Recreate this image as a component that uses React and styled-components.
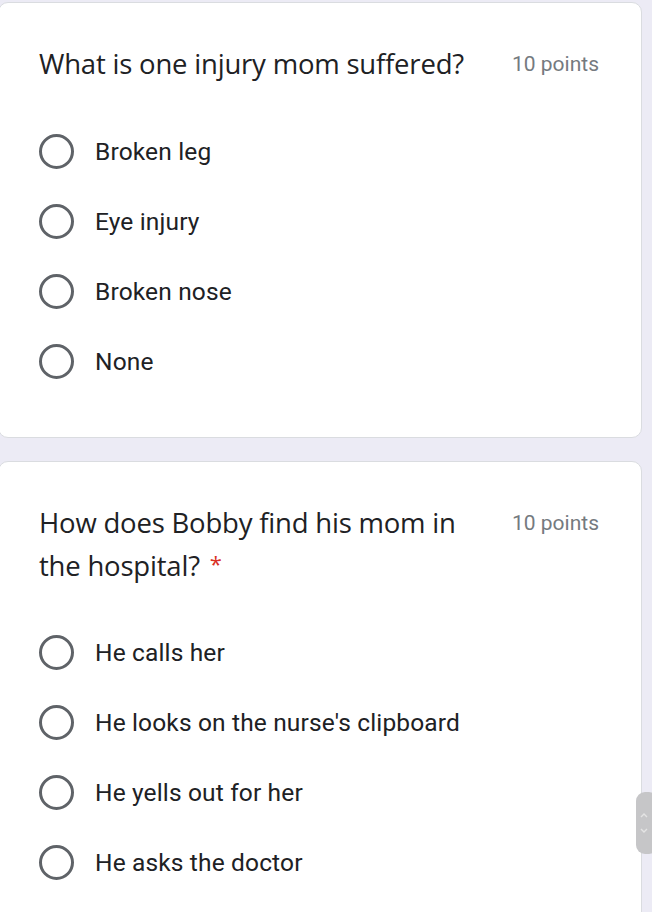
import styled, { createGlobalStyle } from 'styled-components';

const GlobalStyle = createGlobalStyle`
  html, body {
    margin: 0;
    padding: 0;
    background: #ecebf5;
    overflow: hidden;
  }
`;

const questions = [
  {
    title: 'What is one injury mom suffered?',
    points: '10 points',
    required: false,
    options: ['Broken leg', 'Eye injury', 'Broken nose', 'None'],
  },
  {
    title: 'How does Bobby find his mom in the hospital?',
    points: '10 points',
    required: true,
    options: [
      'He calls her',
      "He looks on the nurse's clipboard",
      'He yells out for her',
      'He asks the doctor',
    ],
  },
];

export default function App() {
  return (
    <>
      <GlobalStyle />
      <Page>
        {questions.map((q) => (
          <Card key={q.title}>
            <Header>
              <Title>
                <span>{q.title}</span>
                {q.required && <Star>*</Star>}
              </Title>
              <Points>{q.points}</Points>
            </Header>
            <Options>
              {q.options.map((opt) => (
                <Option key={opt}>
                  <Radio />
                  <OptionLabel>{opt}</OptionLabel>
                </Option>
              ))}
            </Options>
          </Card>
        ))}
      </Page>
      <ScrollHandle>
        <svg width="10" height="34" viewBox="0 0 10 34" fill="none" stroke="#e4e4e4" strokeWidth="1.4">
          <path d="M2 11 L5 8 L8 11" />
          <path d="M2 23 L5 26 L8 23" />
        </svg>
      </ScrollHandle>
    </>
  );
}

const Page = styled.div`
  display: flex;
  flex-direction: column;
  gap: 23px;
  padding: 2px 10px 0 0;
  margin-left: -2px;
  height: 910px;
  overflow: hidden;
`;

const Card = styled.div`
  background: #fff;
  border: 1px solid #dadce0;
  border-radius: 10px;
  padding: 39px 42px 41px 40px;
  flex-shrink: 0;
`;

const Header = styled.div`
  display: flex;
  align-items: flex-start;
  gap: 44px;
`;

const Title = styled.div`
  flex: 1;
  font-family: 'Open Sans', sans-serif;
  font-size: 27.5px;
  line-height: 43px;
  color: #202124;
  letter-spacing: -0.2px;
`;

const Star = styled.span`
  display: inline-block;
  color: #d93025;
  font-size: 22px;
  line-height: 22px;
  margin-left: 10px;
  vertical-align: 4px;
`;

const Points = styled.div`
  font-family: Roboto, sans-serif;
  font-size: 21px;
  line-height: 43px;
  color: #757a7f;
  white-space: nowrap;
  padding-top: 1px;
`;

const Options = styled.div`
  display: flex;
  flex-direction: column;
  margin-top: 30px;
`;

const Option = styled.div`
  display: flex;
  align-items: center;
  gap: 21px;
  height: 70px;
`;

const Radio = styled.span`
  box-sizing: border-box;
  width: 35px;
  height: 35px;
  border: 3.5px solid #5f6368;
  border-radius: 50%;
  flex-shrink: 0;
`;

const OptionLabel = styled.span`
  font-family: Roboto, sans-serif;
  font-size: 24.5px;
  letter-spacing: 0.15px;
  color: #202124;
`;

const ScrollHandle = styled.div`
  position: fixed;
  right: -6px;
  top: 792px;
  width: 22px;
  height: 62px;
  border-radius: 9px;
  background: #c6c6c8;
  display: flex;
  align-items: center;
  justify-content: center;
  padding-right: 6px;
  box-sizing: border-box;
`;
